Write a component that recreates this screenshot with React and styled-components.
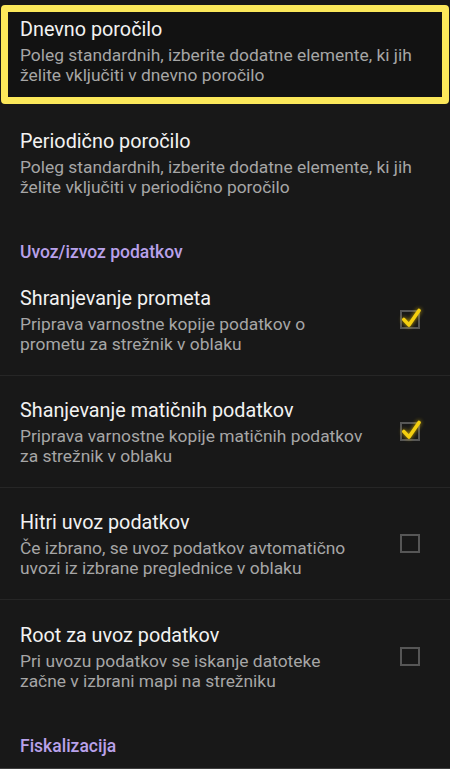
import React from "react";
import styled, { createGlobalStyle } from "styled-components";

const Global = createGlobalStyle`
  html, body { margin: 0; padding: 0; background: #181818; }
  body { font-family: Roboto, "Noto Sans", sans-serif; -webkit-font-smoothing: antialiased; }
`;

const Screen = styled.div`
  width: 450px;
  height: 769px;
  overflow: hidden;
  background: #181818;
  box-sizing: border-box;
  border-bottom: 1px solid #3c3c3c;
`;

const List = styled.div`
  display: flex;
  flex-direction: column;
  margin-top: -6px;
`;

const Item = styled.div`
  position: relative;
  height: 112px;
  box-sizing: border-box;
  padding: 1px 20px 0 20px;
  display: flex;
  align-items: center;
  border-bottom: ${(p) => (p.$divider ? "1px solid #262626" : "none")};
`;

const Focus = styled.div`
  position: absolute;
  left: 1px;
  right: 1px;
  top: 11px;
  bottom: 2px;
  border: 7px solid #fbe85a;
  border-radius: 4px;
  background: #121212;
  pointer-events: none;
`;

const TextCol = styled.div`
  position: relative;
  flex: 1;
  min-width: 0;
  display: flex;
  flex-direction: column;
  gap: 3px;
`;

const Title = styled.div`
  font-size: 19.8px;
  line-height: 25px;
  color: #f2f2f2;
`;

const Sub = styled.div`
  font-size: 17.4px;
  line-height: 20px;
  color: #a6a6a6;
`;

const Header = styled.div`
  height: 46px;
  box-sizing: border-box;
  padding: 24px 20px 0 20px;
  font-size: 17.5px;
  line-height: 20px;
  font-weight: 500;
  color: #b8a1ea;
`;

const CheckWrap = styled.div`
  position: relative;
  width: 20px;
  height: 20px;
  margin: 0 10px 0 30px;
  flex: none;
`;

const Box = styled.div`
  width: 20px;
  height: 19px;
  box-sizing: border-box;
  border: 2px solid #565656;
`;

const Tick = styled.svg`
  position: absolute;
  left: 0;
  top: 0;
  width: 20px;
  height: 20px;
  overflow: visible;
  filter: drop-shadow(0 0 2px rgba(255, 210, 0, 0.75));
`;

function Check({ checked }) {
  return (
    <CheckWrap>
      <Box />
      {checked && (
        <Tick viewBox="0 0 20 20">
          <path
            d="M3.8 9.5 L9 15 L19 0.5"
            fill="none"
            stroke="#f4cf10"
            strokeWidth="3.6"
            strokeLinecap="round"
            strokeLinejoin="round"
          />
        </Tick>
      )}
    </CheckWrap>
  );
}

const rows = [
  { t: "Shranjevanje prometa", s: "Priprava varnostne kopije podatkov o prometu za strežnik v oblaku", c: true },
  { t: "Shanjevanje matičnih podatkov", s: "Priprava varnostne kopije matičnih podatkov za strežnik v oblaku", c: true },
  { t: "Hitri uvoz podatkov", s: "Če izbrano, se uvoz podatkov avtomatično uvozi iz izbrane preglednice v oblaku", c: false },
  { t: "Root za uvoz podatkov", s: "Pri uvozu podatkov se iskanje datoteke začne v izbrani mapi na strežniku", c: false },
];

export default function App() {
  return (
    <Screen>
      <Global />
      <List>
        <Item>
          <Focus />
          <TextCol>
            <Title>Dnevno poročilo</Title>
            <Sub>Poleg standardnih, izberite dodatne elemente, ki jih želite vključiti v dnevno poročilo</Sub>
          </TextCol>
        </Item>
        <Item>
          <TextCol>
            <Title>Periodično poročilo</Title>
            <Sub>Poleg standardnih, izberite dodatne elemente, ki jih želite vključiti v periodično poročilo</Sub>
          </TextCol>
        </Item>
        <Header>Uvoz/izvoz podatkov</Header>
        {rows.map((r, i) => (
          <Item key={r.t} $divider={i < rows.length - 1}>
            <TextCol>
              <Title>{r.t}</Title>
              <Sub>{r.s}</Sub>
            </TextCol>
            <Check checked={r.c} />
          </Item>
        ))}
        <Header>Fiskalizacija</Header>
      </List>
    </Screen>
  );
}
